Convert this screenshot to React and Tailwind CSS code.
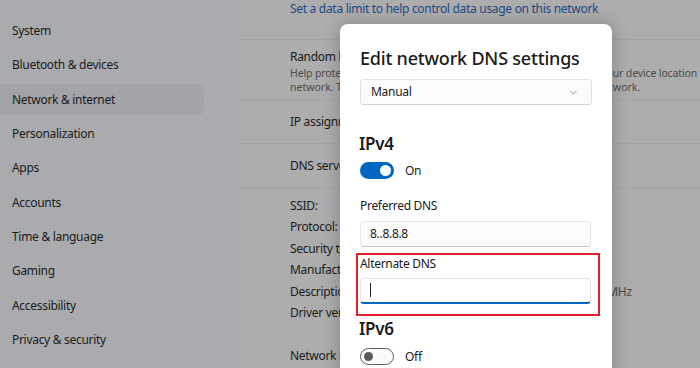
import { ChevronDown } from 'lucide-react'

const navItems = [
  'System',
  'Bluetooth & devices',
  'Network & internet',
  'Personalization',
  'Apps',
  'Accounts',
  'Time & language',
  'Gaming',
  'Accessibility',
  'Privacy & security'
]

const props = [
  { label: 'SSID:', value: 'MyHomeNetwork' },
  { label: 'Protocol:', value: 'Wi-Fi 6 (802.11ax)' },
  { label: 'Security type:', value: 'WPA2-Personal' },
  { label: 'Manufacturer:', value: 'Intel Corporation' },
  { label: 'Description:', value: 'Intel(R) Wi-Fi 6 AX201 160MHz' },
  { label: 'Driver version:', value: '22.110.1.1' }
]

function Toggle({ on }) {
  if (on) {
    return (
      <div className="w-[34px] h-[17px] rounded-full bg-[#0067c0] flex items-center justify-end pr-[3px]">
        <div className="w-[11px] h-[11px] rounded-full bg-white"></div>
      </div>
    )
  }
  return (
    <div className="w-[34px] h-[17px] rounded-full border border-[#5f5f5f] bg-[#fafafa] flex items-center pl-[3px]">
      <div className="w-[9px] h-[9px] rounded-full bg-[#5a5a5a]"></div>
    </div>
  )
}

function App() {
  return (
    <div
      className="relative w-[700px] h-[368px] overflow-hidden flex bg-[#acacac] text-[#1b1b1b] tracking-[-0.3px]"
      style={{ fontFamily: '"Noto Sans", "Open Sans", sans-serif' }}
    >
      {/* sidebar */}
      <div className="w-[240px] shrink-0 bg-[#a9abae] pt-[14px]">
        {navItems.map((item) => (
          <div key={item} className="h-[34.3px] flex items-center">
            <div
              className={`w-[204px] h-[31px] rounded-r-md flex items-center pl-[12px] text-[12px] ${
                item === 'Network & internet' ? 'bg-[#a2a4a7]' : ''
              }`}
            >
              {item}
            </div>
          </div>
        ))}
      </div>

      {/* content */}
      <div className="flex-1 bg-[#adadad] text-[12px]">
        <div className="h-[41px] border-b border-[#a3a3a3] pl-[50px] -mt-[1px]">
          <span className="text-[#1c4a86] leading-[20px]">
            Set a data limit to help control data usage on this network
          </span>
        </div>
        <div className="h-[60px] border-b border-[#a3a3a3] pl-[50px] pt-[8px]">
          <div className="leading-[18px]">Random hardware addresses</div>
          <div className="text-[10.5px] leading-[14px] text-[#4b4b4b] whitespace-nowrap tracking-[-0.13px]">
            Help protect your privacy by making it harder for people to track your device location when you
          </div>
          <div className="text-[10.5px] leading-[14px] text-[#4b4b4b] whitespace-nowrap tracking-[0px]">
            network. The setting applies the next time you connect to this network.
          </div>
        </div>
        <div className="h-[44px] border-b border-[#a3a3a3] pl-[50px] flex items-center">IP assignment:</div>
        <div className="h-[44px] border-b border-[#a3a3a3] pl-[50px] flex items-center">DNS server assignment:</div>
        <div className="pl-[50px] pt-[7px]">
          {props.map((p) => (
            <div key={p.label} className="h-[21.5px] flex items-center whitespace-nowrap">
              <span className="w-[182px] shrink-0">{p.label}</span>
              <span className="text-[#4b4b4b]">{p.value}</span>
            </div>
          ))}
          <div className="h-[21px]"></div>
          <div className="h-[21.5px] flex items-center">Network band:</div>
        </div>
      </div>

      {/* dialog */}
      <div className="absolute left-[340px] top-[24px] w-[272px] h-[360px] bg-white rounded-t-lg shadow-[0_0_18px_rgba(0,0,0,0.25)] px-[20px] pt-[20px]">
        <div className="text-[18px] font-medium leading-[28px] tracking-[-0.2px] whitespace-nowrap">Edit network DNS settings</div>
        <div className="mt-[7px] w-[232px] h-[26px] rounded-[4px] border border-[#e3e3e3] border-b-[#d0d0d0] bg-[#fbfbfb] flex items-center justify-between pl-[10px] pr-[12px] text-[12px]">
          <span>Manual</span>
          <ChevronDown size={11} strokeWidth={1.5} className="text-[#5d5d5d]" />
        </div>
        <div className="mt-[27px] text-[17px] font-semibold leading-[24px] -ml-[1px]">IPv4</div>
        <div className="mt-[5.5px] flex items-center gap-[11px] text-[12px]">
          <Toggle on />
          <span>On</span>
        </div>
        <div className="mt-[17px] text-[12px] leading-[18px]">Preferred DNS</div>
        <div className="mt-[6px] w-[231px] h-[26px] rounded-[4px] border border-[#e6e6e6] border-b-[#c4c4c4] bg-[#fbfbfb] flex items-center pl-[9px] text-[12px]">
          8..8.8.8
        </div>
        <div className="mt-[6px] -ml-[4px] w-[244px] h-[63px] border-2 border-[#e0202a] pl-[2px]">
          <div className="text-[12px] leading-[18px]">Alternate DNS</div>
          <div className="mt-[5px] w-[231px] h-[26px] rounded-[4px] border border-[#e6e6e6] border-b-2 border-b-[#0067c0] bg-white flex items-center pl-[9px]">
            <div className="w-[1px] h-[14px] bg-[#1b1b1b]"></div>
          </div>
        </div>
        <div className="mt-[1px] text-[17px] font-semibold leading-[24px] -ml-[1px]">IPv6</div>
        <div className="mt-[7px] flex items-center gap-[11px] text-[12px]">
          <Toggle on={false} />
          <span>Off</span>
        </div>
      </div>
    </div>
  )
}

export default App
